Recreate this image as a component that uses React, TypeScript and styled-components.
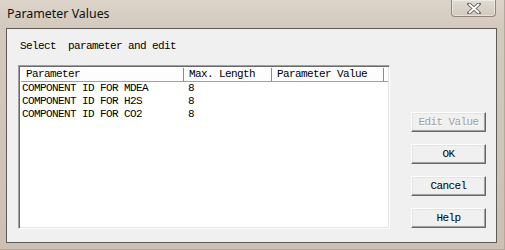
import React from 'react';
import styled, { createGlobalStyle } from 'styled-components';

const GlobalStyle = createGlobalStyle`
  html, body {
    margin: 0;
    padding: 0;
    background: #d2c8bc;
  }
`;

const monoFont = `'Liberation Mono', 'DejaVu Sans Mono', monospace`;

const Window = styled.div`
  width: 505px;
  height: 250px;
  box-sizing: border-box;
  display: flex;
  flex-direction: column;
  background: linear-gradient(to bottom, #dcd4ca 0px, #d3c9bd 28px, #cbc0b3 250px);
  border-right: 1px solid #b3a89b;
  border-bottom: 1px solid #b3a89b;
`;

const TitleBar = styled.div`
  height: 28px;
  display: flex;
  align-items: flex-start;
  justify-content: space-between;
  padding-left: 7px;
  padding-right: 8px;
`;

const Title = styled.span`
  font-family: 'Noto Sans', 'Open Sans', sans-serif;
  font-size: 12.4px;
  line-height: 14px;
  margin-top: 7px;
  color: #111;
`;

const CloseButton = styled.div`
  width: 45px;
  height: 17px;
  box-sizing: border-box;
  border: 1px solid #8f857a;
  border-top: none;
  border-radius: 0 0 4px 4px;
  background: linear-gradient(to bottom, #e2dbd3, #d2c8bc);
  box-shadow: inset 0 0 0 1px rgba(255, 255, 255, 0.45);
  display: flex;
  align-items: center;
  justify-content: center;
`;

const Client = styled.div`
  margin: 0 7px 0 6px;
  height: 215px;
  box-sizing: border-box;
  background: #f0f0f0;
  border: 1px solid #5e5a55;
  padding: 10px 0 0 11px;
  display: flex;
  flex-direction: column;
`;

const Prompt = styled.div`
  font-family: ${monoFont};
  font-size: 11px;
  letter-spacing: -0.6px;
  line-height: 14px;
  color: #000;
  margin-left: 2px;
  white-space: pre;
`;

const Body = styled.div`
  display: flex;
  margin-top: 12px;
`;

const ListBox = styled.div`
  width: 372px;
  height: 164px;
  box-sizing: border-box;
  background: #fff;
  border-top: 1px solid #a0a0a0;
  border-left: 1px solid #a0a0a0;
  border-right: 1px solid #fff;
  border-bottom: 1px solid #fff;
  box-shadow: inset 1px 1px 0 #696969, inset -1px -1px 0 #e3e3e3;
  padding: 2px 1px 0 2px;
`;

const Header = styled.div`
  display: flex;
  height: 13px;
  border-bottom: 1px solid #a0a0a0;
  background: #fdfdfd;
`;

const HeaderCell = styled.div<{ $w: number }>`
  width: ${(p) => p.$w}px;
  box-sizing: border-box;
  border-right: 1px solid #8a8a8a;
  border-left: 1px solid #fff;
  font-family: ${monoFont};
  font-size: 11px;
  letter-spacing: -0.6px;
  line-height: 13px;
  color: #000;
  padding-left: 4px;
  white-space: pre;
  overflow: hidden;
`;

const Row = styled.div`
  display: flex;
  height: 13px;
  font-family: ${monoFont};
  font-size: 11px;
  letter-spacing: -0.6px;
  line-height: 13px;
  color: #000;
  white-space: pre;
`;

const RowCell = styled.div<{ $w: number }>`
  width: ${(p) => p.$w}px;
  padding-left: ${(p) => (p.$w === 163 ? 1 : 4)}px;
  box-sizing: border-box;
`;

const Buttons = styled.div`
  display: flex;
  flex-direction: column;
  gap: 12px;
  margin-left: 21px;
  margin-top: 47px;
`;

const Button = styled.div<{ $disabled?: boolean }>`
  width: 75px;
  height: 20px;
  box-sizing: border-box;
  background: #f0f0f0;
  border-top: 1px solid #fff;
  border-left: 1px solid #fff;
  border-right: 1px solid #696969;
  border-bottom: 1px solid #696969;
  box-shadow: inset -1px -1px 0 #a0a0a0, inset 1px 1px 0 #e3e3e3;
  display: flex;
  align-items: center;
  justify-content: center;
  font-family: ${monoFont};
  font-size: 11px;
  letter-spacing: -0.6px;
  color: ${(p) => (p.$disabled ? '#a0a0a0' : '#000')};
  text-shadow: ${(p) => (p.$disabled ? '1px 1px 0 #fff' : 'none')};
  white-space: pre;
`;

const columns = [
  { label: 'Parameter', w: 163 },
  { label: 'Max. Length', w: 88 },
  { label: 'Parameter Value', w: 112 },
];

const rows = [
  ['COMPONENT ID FOR MDEA', '8', ''],
  ['COMPONENT ID FOR H2S', '8', ''],
  ['COMPONENT ID FOR CO2', '8', ''],
];

const CloseIcon = () => (
  <svg width="14" height="11" viewBox="0 0 14 11">
    <path
      d="M2 1 L12 10 M12 1 L2 10"
      stroke="#5a544d"
      strokeWidth="3.6"
      strokeLinecap="round"
      fill="none"
    />
    <path d="M2.5 1.5 L11.5 9.5 M11.5 1.5 L2.5 9.5" stroke="#fff" strokeWidth="2" strokeLinecap="round" />
  </svg>
);

export default function App() {
  return (
    <>
      <GlobalStyle />
      <Window>
        <TitleBar>
          <Title>Parameter Values</Title>
          <CloseButton>
            <CloseIcon />
          </CloseButton>
        </TitleBar>
        <Client>
          <Prompt>Select  parameter and edit</Prompt>
          <Body>
            <ListBox>
              <Header>
                {columns.map((c) => (
                  <HeaderCell key={c.label} $w={c.w}>
                    {c.label}
                  </HeaderCell>
                ))}
              </Header>
              {rows.map((r) => (
                <Row key={r[0]}>
                  {r.map((v, i) => (
                    <RowCell key={i} $w={columns[i].w}>
                      {v}
                    </RowCell>
                  ))}
                </Row>
              ))}
            </ListBox>
            <Buttons>
              <Button $disabled>Edit Value</Button>
              <Button>OK</Button>
              <Button>Cancel</Button>
              <Button>Help</Button>
            </Buttons>
          </Body>
        </Client>
      </Window>
    </>
  );
}
